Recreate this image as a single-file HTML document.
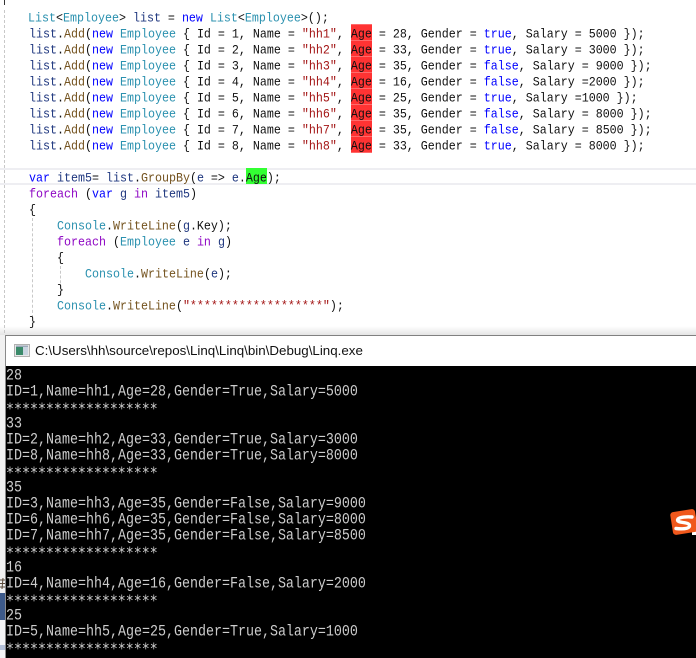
<!DOCTYPE html>
<html>
<head>
<meta charset="utf-8">
<style>
html,body{margin:0;padding:0;background:#fff;}
#p{position:relative;width:696px;height:658px;overflow:hidden;background:#fff;}
.c{position:absolute;left:0;white-space:pre;font-family:"Liberation Mono",monospace;font-size:11.67px;line-height:16px;height:16px;color:#111;transform:scaleY(1.12);transform-origin:0 50%;}
.t{color:#2b91af}.k{color:#0000ff}.m{color:#74531f}.v{color:#1f377f}.s{color:#a31515}.f{color:#8f08c4}
.r{background:#ff3333;position:absolute;left:351px;width:21px;height:15px;}
.o{position:absolute;left:6px;white-space:pre;font-family:"Liberation Mono",monospace;font-size:13.33px;line-height:16px;height:16px;color:#cccccc;transform:scaleY(1.15);transform-origin:0 50%;}
.o.st{font-family:"DejaVu Sans Mono",monospace;font-size:13.28px;transform:translateY(3px) scaleY(1.15);}
.g{position:absolute;width:0;border-left:1px dashed #c8c8c8;}
</style>
</head>
<body>
<div id="p">
<div style="position:absolute;left:0;top:326px;width:696px;height:9px;background:linear-gradient(#ffffff,#e4e4e4);"></div>
<div style="position:absolute;left:4px;top:0;width:2px;height:5px;border-left:1px solid #333;"></div>
<div class="g" style="left:4px;top:10px;height:323px;"></div>
<div style="position:absolute;left:0;top:168px;width:696px;height:2px;background:#eeeef2;"></div>
<div style="position:absolute;left:0;top:183px;width:696px;height:2px;background:#eeeef2;"></div>
<div style="position:absolute;left:351px;top:24px;width:21px;height:129px;background:#ff6a6a;"></div>
<div class="r" style="top:25px;"></div>
<div class="r" style="top:41px;"></div>
<div class="r" style="top:57px;"></div>
<div class="r" style="top:73px;"></div>
<div class="r" style="top:89px;"></div>
<div class="r" style="top:105px;"></div>
<div class="r" style="top:121px;"></div>
<div class="r" style="top:137px;"></div>
<div style="position:absolute;left:246px;top:168px;width:21px;height:16px;background:#33ff33;"></div>
<div class="g" style="left:32px;top:218px;height:100px;"></div>
<div class="g" style="left:60px;top:266px;height:22px;"></div>

<div class="c" style="left:28px;top:10px"><span class="t">List</span>&lt;<span class="t">Employee</span>&gt; <span class="v">list</span> = <span class="k">new</span> <span class="t">List</span>&lt;<span class="t">Employee</span>&gt;();</div>
<div class="c" style="left:29px;top:26px"><span class="v">list</span>.<span class="m">Add</span>(<span class="k">new</span> <span class="t">Employee</span> { Id = 1, Name = <span class="s">"hh1"</span>, Age = 28, Gender = <span class="k">true</span>, Salary = 5000 });</div>
<div class="c" style="left:29px;top:42px"><span class="v">list</span>.<span class="m">Add</span>(<span class="k">new</span> <span class="t">Employee</span> { Id = 2, Name = <span class="s">"hh2"</span>, Age = 33, Gender = <span class="k">true</span>, Salary = 3000 });</div>
<div class="c" style="left:29px;top:58px"><span class="v">list</span>.<span class="m">Add</span>(<span class="k">new</span> <span class="t">Employee</span> { Id = 3, Name = <span class="s">"hh3"</span>, Age = 35, Gender = <span class="k">false</span>, Salary = 9000 });</div>
<div class="c" style="left:29px;top:74px"><span class="v">list</span>.<span class="m">Add</span>(<span class="k">new</span> <span class="t">Employee</span> { Id = 4, Name = <span class="s">"hh4"</span>, Age = 16, Gender = <span class="k">false</span>, Salary =2000 });</div>
<div class="c" style="left:29px;top:90px"><span class="v">list</span>.<span class="m">Add</span>(<span class="k">new</span> <span class="t">Employee</span> { Id = 5, Name = <span class="s">"hh5"</span>, Age = 25, Gender = <span class="k">true</span>, Salary =1000 });</div>
<div class="c" style="left:29px;top:106px"><span class="v">list</span>.<span class="m">Add</span>(<span class="k">new</span> <span class="t">Employee</span> { Id = 6, Name = <span class="s">"hh6"</span>, Age = 35, Gender = <span class="k">false</span>, Salary = 8000 });</div>
<div class="c" style="left:29px;top:122px"><span class="v">list</span>.<span class="m">Add</span>(<span class="k">new</span> <span class="t">Employee</span> { Id = 7, Name = <span class="s">"hh7"</span>, Age = 35, Gender = <span class="k">false</span>, Salary = 8500 });</div>
<div class="c" style="left:29px;top:138px"><span class="v">list</span>.<span class="m">Add</span>(<span class="k">new</span> <span class="t">Employee</span> { Id = 8, Name = <span class="s">"hh8"</span>, Age = 33, Gender = <span class="k">true</span>, Salary = 8000 });</div>
<div class="c" style="left:29px;top:170px"><span class="k">var</span> <span class="v">item5</span>= <span class="v">list</span>.<span class="m">GroupBy</span>(<span class="v">e</span> =&gt; <span class="v">e</span>.Age);</div>
<div class="c" style="left:29px;top:186px"><span class="f">foreach</span> (<span class="k">var</span> <span class="v">g</span> <span class="f">in</span> <span class="v">item5</span>)</div>
<div class="c" style="left:29px;top:202px">{</div>
<div class="c" style="left:57px;top:218px"><span class="t">Console</span>.<span class="m">WriteLine</span>(<span class="v">g</span>.Key);</div>
<div class="c" style="left:57px;top:234px"><span class="f">foreach</span> (<span class="t">Employee</span> <span class="v">e</span> <span class="f">in</span> <span class="v">g</span>)</div>
<div class="c" style="left:57px;top:250px">{</div>
<div class="c" style="left:85px;top:266px"><span class="t">Console</span>.<span class="m">WriteLine</span>(<span class="v">e</span>);</div>
<div class="c" style="left:57px;top:282px">}</div>
<div class="c" style="left:57px;top:298px"><span class="t">Console</span>.<span class="m">WriteLine</span>(<span class="s">"*******************"</span>);</div>
<div class="c" style="left:29px;top:314px">}</div>

<div style="position:absolute;left:0;top:335px;width:5px;height:323px;background:#f1f1f1;"></div>
<svg style="position:absolute;left:0;top:578px" width="5" height="11" viewBox="0 0 5 11"><path d="M0 2 L5 2 M0 5.5 L5 5.5 M0 9 L5 9 M3 0 L2 11" stroke="#5a4a3a" stroke-width="1" fill="none"/></svg>
<div style="position:absolute;left:0;top:593px;width:5px;height:27px;background:#3d5a8a;"></div>
<div style="position:absolute;left:0;top:620px;width:5px;height:25px;background:#f4f4f6;"></div>
<div style="position:absolute;left:0;top:645px;width:5px;height:5px;background:#b4c0d8;"></div>
<div style="position:absolute;left:0;top:650px;width:5px;height:8px;background:#f4f4f6;"></div>
<div style="position:absolute;left:5px;top:335px;width:691px;height:1px;background:#808080;"></div>
<div style="position:absolute;left:5px;top:336px;width:691px;height:30px;background:#fff;"></div>
<div style="position:absolute;left:5px;top:335px;width:1px;height:323px;background:#8a8a8a;"></div>
<svg style="position:absolute;left:14px;top:344px" width="16" height="14" viewBox="0 0 16 14"><rect x="0.5" y="0.5" width="15" height="12" fill="#e8e8e8" stroke="#b0b0b0"/><rect x="2" y="3" width="7" height="8" fill="#3a8a6a"/><rect x="9" y="3" width="5" height="8" fill="#c8d4e0"/><rect x="2" y="1.5" width="12" height="1.5" fill="#9aa8b8"/></svg>
<div style="position:absolute;left:35px;top:342px;font-family:'Liberation Sans',sans-serif;font-size:13.35px;line-height:17px;color:#111;white-space:pre;">C:\Users\hh\source\repos\Linq\Linq\bin\Debug\Linq.exe</div>
<div style="position:absolute;left:6px;top:366px;width:690px;height:292px;background:#000;"></div>

<div class="o" style="top:369px">28</div>
<div class="o" style="top:385px">ID=1,Name=hh1,Age=28,Gender=True,Salary=5000</div>
<div class="o st" style="top:399px">*******************</div>
<div class="o" style="top:417px">33</div>
<div class="o" style="top:433px">ID=2,Name=hh2,Age=33,Gender=True,Salary=3000</div>
<div class="o" style="top:449px">ID=8,Name=hh8,Age=33,Gender=True,Salary=8000</div>
<div class="o st" style="top:463px">*******************</div>
<div class="o" style="top:481px">35</div>
<div class="o" style="top:497px">ID=3,Name=hh3,Age=35,Gender=False,Salary=9000</div>
<div class="o" style="top:513px">ID=6,Name=hh6,Age=35,Gender=False,Salary=8000</div>
<div class="o" style="top:529px">ID=7,Name=hh7,Age=35,Gender=False,Salary=8500</div>
<div class="o st" style="top:543px">*******************</div>
<div class="o" style="top:561px">16</div>
<div class="o" style="top:577px">ID=4,Name=hh4,Age=16,Gender=False,Salary=2000</div>
<div class="o st" style="top:591px">*******************</div>
<div class="o" style="top:609px">25</div>
<div class="o" style="top:625px">ID=5,Name=hh5,Age=25,Gender=True,Salary=1000</div>
<div class="o st" style="top:639px">*******************</div>

<div style="position:absolute;left:692px;top:530px;width:4px;height:5px;background:#fff;"></div>
<svg style="position:absolute;left:668px;top:507px" width="28" height="30" viewBox="0 0 28 30"><rect x="3.5" y="3.5" width="25" height="23" rx="3" fill="#f0581c" transform="rotate(-9 16 15)"/><path d="M24 10 C19 9.5 12 10 10 12 C8.5 14 11 15 15 15.5 C19 16 23 17 21 20 C19.5 22 13 22 8 21.5" fill="none" stroke="#fff" stroke-width="3.4" stroke-linecap="round"/></svg>
</div>
</body>
</html>
